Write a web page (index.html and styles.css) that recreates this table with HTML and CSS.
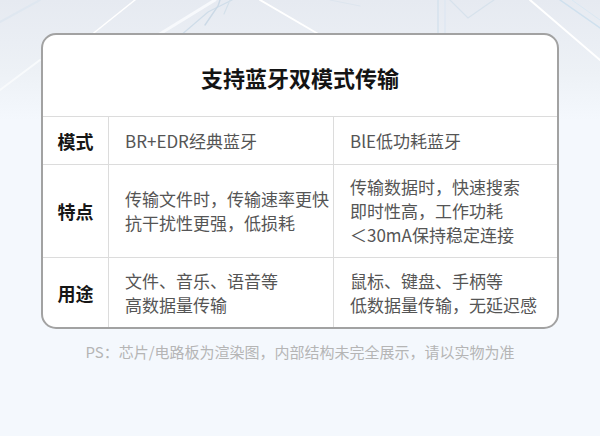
FILE: index.html
```html
<!DOCTYPE html>
<html lang="zh-CN">
<head>
<meta charset="utf-8">
<title>支持蓝牙双模式传输</title>
<link rel="stylesheet" href="styles.css">
</head>
<body>
<div class="page">
  <svg class="deco" width="600" height="120" viewBox="0 0 600 120" aria-hidden="true">
    <defs>
      <linearGradient id="bg" x1="0" y1="0" x2="0" y2="1">
        <stop offset="0" stop-color="#e6eaf1"/>
        <stop offset="0.6" stop-color="#edf1f6"/>
        <stop offset="1" stop-color="#f4f8fd"/>
      </linearGradient>
    </defs>
    <rect width="600" height="120" fill="url(#bg)"/>
    <g fill="none" stroke-linecap="round">
      <path d="M0 22 L40 0" stroke="#dfe7f0" stroke-width="2"/>
      <path d="M60 60 L135 0" stroke="#ffffff" stroke-width="1.5"/>
      <path d="M150 40 L215 0" stroke="#f7f9fc" stroke-width="3"/>
      <path d="M180 36 L208 12 L232 0" stroke="#cfdde9" stroke-width="1.2"/>
      <path d="M205 25 L218 6 L220 0" stroke="#cbd9e6" stroke-width="1.4"/>
      <path d="M224 14 L230 0" stroke="#d4e0ea" stroke-width="1.2"/>
      <path d="M260 0 L320 35" stroke="#ffffff" stroke-width="2"/>
      <path d="M330 0 L360 6" stroke="#dde5ee" stroke-width="1"/>
      <path d="M438 0 L438 40" stroke="#d3e0ec" stroke-width="1.3"/>
      <path d="M445 0 L445 40" stroke="#dde7f1" stroke-width="1.3"/>
      <path d="M450 0 L468 18 L488 4 L494 0" stroke="#d7e2ec" stroke-width="1.2"/>
      <path d="M530 0 L600 60" stroke="#ffffff" stroke-width="2"/>
      <path d="M560 0 L600 28" stroke="#cfe0ee" stroke-width="1.5"/>
      <path d="M572 0 L600 20" stroke="#d9e7f2" stroke-width="1"/>
      <path d="M0 90 L40 60" stroke="#f8fafc" stroke-width="2"/>
    </g>
  </svg>

  <div class="card">
    <h1 class="title">支持蓝牙双模式传输</h1>
    <div class="row row-mode">
      <div class="label">模式</div>
      <div class="cell">BR+EDR经典蓝牙</div>
      <div class="cell">BlE低功耗蓝牙</div>
    </div>
    <div class="row row-feature">
      <div class="label">特点</div>
      <div class="cell">传输文件时，传输速率更快<br>抗干扰性更强，低损耗</div>
      <div class="cell">传输数据时，快速搜索<br>即时性高，工作功耗<br>＜30mA保持稳定连接</div>
    </div>
    <div class="row row-use">
      <div class="label">用途</div>
      <div class="cell">文件、音乐、语音等<br>高数据量传输</div>
      <div class="cell">鼠标、键盘、手柄等<br>低数据量传输，无延迟感</div>
    </div>
  </div>

  <p class="note">PS：芯片/电路板为渲染图，内部结构未完全展示，请以实物为准</p>
</div>
</body>
</html>
```
FILE: styles.css
```css
html, body {
  margin: 0;
  padding: 0;
}
body {
  background: #f4f8fd;
  font-family: "Noto Sans CJK SC", "Noto Sans", sans-serif;
  width: 600px;
  height: 436px;
  overflow: hidden;
}
.page {
  position: relative;
  width: 600px;
  height: 436px;
  padding-top: 33px;
  box-sizing: border-box;
  background: #f4f8fd;
}
.deco {
  position: absolute;
  left: 0;
  top: 0;
  z-index: 0;
}
.card {
  position: relative;
  z-index: 1;
  width: 518px;
  margin: 0 auto;
  box-sizing: border-box;
  background: #ffffff;
  border: 2px solid #a2a2a2;
  border-radius: 15px;
  overflow: hidden;
}
.title {
  margin: 0;
  height: 81px;
  display: flex;
  align-items: center;
  justify-content: center;
  font-size: 22px;
  font-weight: 700;
  color: #141414;
  padding-top: 2px;
  box-sizing: border-box;
}
.row {
  display: grid;
  grid-template-columns: 65px 225px 1fr;
  border-top: 1px solid #dcdcdc;
  box-sizing: border-box;
}
.row-mode { height: 48px; }
.row-feature { height: 93px; }
.row-use { height: 70px; }
.label {
  display: flex;
  align-items: center;
  justify-content: center;
  font-size: 18px;
  font-weight: 700;
  color: #161616;
}
.cell {
  display: flex;
  align-items: center;
  border-left: 1px solid #dcdcdc;
  padding-left: 16px;
  font-size: 17px;
  color: #555555;
  line-height: 24px;
}
.row-use .cell {
  padding-top: 1px;
}
.note {
  margin: 12px 0 0;
  text-align: center;
  font-size: 15px;
  color: #b5b5b5;
  position: relative;
  z-index: 1;
}
```
